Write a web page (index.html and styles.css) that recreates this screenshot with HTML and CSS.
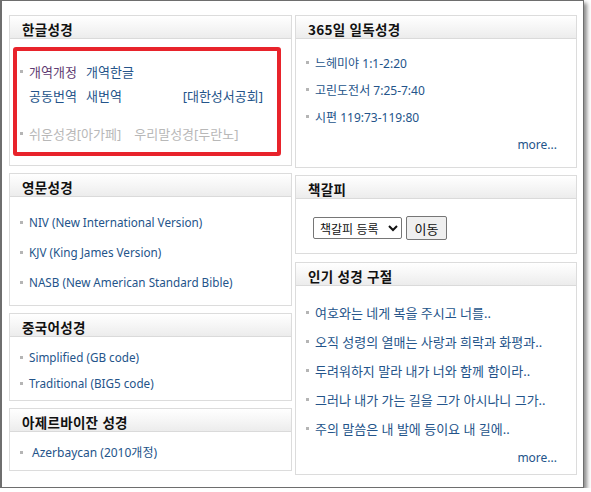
FILE: index.html
```html
<!DOCTYPE html>
<html lang="ko">
<head>
<meta charset="utf-8">
<title>성경</title>
<link rel="stylesheet" href="styles.css">
</head>
<body>
<div class="frame">
  <div class="cols">
    <div class="col">
      <section class="box b-kor">
        <h2 class="hd">한글성경</h2>
        <div class="bd kor">
          <div class="krow"><span class="dot"></span><a class="lnk visited w1">개역개정</a><a class="lnk">개역한글</a></div>
          <div class="krow"><span class="nodot"></span><a class="lnk w1">공동번역</a><a class="lnk">새번역</a><a class="lnk push">[대한성서공회]</a></div>
          <div class="krow r3"><span class="dot"></span><a class="lnk off">쉬운성경[아가페]</a><a class="lnk off g2">우리말성경[두란노]</a></div>
        </div>
        <div class="mark"></div>
      </section>
      <section class="box b-eng">
        <h2 class="hd">영문성경</h2>
        <ul class="bd list l30 en">
          <li><a class="lnk">NIV (New International Version)</a></li>
          <li><a class="lnk">KJV (King James Version)</a></li>
          <li><a class="lnk">NASB (New American Standard Bible)</a></li>
        </ul>
      </section>
      <section class="box b-chn">
        <h2 class="hd">중국어성경</h2>
        <ul class="bd list l26 en">
          <li><a class="lnk">Simplified (GB code)</a></li>
          <li><a class="lnk">Traditional (BIG5 code)</a></li>
        </ul>
      </section>
      <section class="box b-aze">
        <h2 class="hd">아제르바이잔 성경</h2>
        <ul class="bd list l26">
          <li><a class="lnk ind">Azerbaycan (2010개정)</a></li>
        </ul>
      </section>
    </div>
    <div class="col">
      <section class="box b-day">
        <h2 class="hd">365일 일독성경</h2>
        <ul class="bd list l27">
          <li><a class="lnk">느헤미야 1:1-2:20</a></li>
          <li><a class="lnk">고린도전서 7:25-7:40</a></li>
          <li><a class="lnk">시편 119:73-119:80</a></li>
        </ul>
        <div class="more m1"><a class="lnk">more...</a></div>
      </section>
      <section class="box b-mark">
        <h2 class="hd">책갈피</h2>
        <div class="bd bm">
          <select class="sel"><option>책갈피 등록</option></select>
          <button class="btn" type="button">이동</button>
        </div>
      </section>
      <section class="box b-pop">
        <h2 class="hd">인기 성경 구절</h2>
        <ul class="bd list l29 ko">
          <li><a class="lnk">여호와는 네게 복을 주시고 너를..</a></li>
          <li><a class="lnk">오직 성령의 열매는 사랑과 희락과 화평과..</a></li>
          <li><a class="lnk">두려워하지 말라 내가 너와 함께 함이라..</a></li>
          <li><a class="lnk">그러나 내가 가는 길을 그가 아시나니 그가..</a></li>
          <li><a class="lnk">주의 말씀은 내 발에 등이요 내 길에..</a></li>
        </ul>
        <div class="more m2"><a class="lnk">more...</a></div>
      </section>
    </div>
  </div>
</div>
</body>
</html>
```

FILE: styles.css
```css
* { box-sizing: border-box; }
html, body { margin: 0; padding: 0; background: #fff; }
body {
  font-family: "Noto Sans", "Noto Sans CJK KR", sans-serif;
  font-size: 12px;
  color: #333;
}
.frame {
  width: 584px;
  height: 488px;
  border: 1px solid #6e6e6e;
  border-left-width: 2px;
  box-shadow: 3px 3px 4px rgba(0,0,0,0.45);
  padding: 14px 0 0 7px;
  background: #fff;
}
.cols {
  display: grid;
  grid-template-columns: 283px 282px;
  column-gap: 3px;
  align-items: start;
}
.col { display: flex; flex-direction: column; gap: 7px; }
.box {
  position: relative;
  border: 1px solid #dcdcdc;
  background: #fff;
}
.b-kor { height: 151px; }
.b-eng { height: 133px; }
.b-chn { height: 88px; }
.b-aze { height: 63px; }
.b-day { height: 153px; }
.b-mark { height: 79px; margin-bottom: 1px; }
.b-pop { height: 213px; }
.hd {
  margin: 0;
  height: 23px;
  border-bottom: 1px solid #dadada;
  background: linear-gradient(#ffffff, #f6f6f6 50%, #ececec);
  font-family: "Noto Sans CJK KR", sans-serif;
  font-weight: 700;
  font-size: 13.5px;
  line-height: 26px;
  color: #111;
  padding-left: 12px;
  letter-spacing: 0.3px;
}
.bd { margin: 0; }
.lnk { color: #24548a; text-decoration: none; white-space: nowrap; }
.visited { color: #5e3a72; }
.off { color: #b8b8b8; }
.list { list-style: none; padding: 0 0 0 10px; }
.list li { display: flex; align-items: center; }
.list li::before, .dot {
  content: "";
  display: inline-block;
  width: 3px;
  height: 3px;
  background: #b5b5b5;
  margin-right: 6px;
  flex: none;
}
.en { font-size: 11.7px; }
.ko { font-size: 13px; }
.nodot { display: inline-block; width: 9px; flex: none; }
.l30 { padding-top: 10px; }
.l30 li { height: 30px; }
.l26 { padding-top: 7px; }
.l26 li { height: 26px; }
.l27 { padding-top: 10px; }
.l27 li { height: 27px; }
.l29 { padding-top: 12px; }
.l29 li { height: 29px; }
.ind { margin-left: 3px; }
.kor { padding: 20px 28px 0 10px; font-size: 13px; }
.krow { display: flex; align-items: center; height: 24px; }
.krow.r3 { margin-top: 14px; }
.w1 { width: 57px; flex: none; }
.g2 { margin-left: 13px; }
.push { margin-left: auto; }
.more { text-align: right; padding-right: 19px; line-height: 27px; }
.m1 { margin-top: 1px; }
.m2 { margin-top: 1px; }
.bm { padding: 17px 0 0 17px; display: flex; align-items: center; gap: 4px; }
.sel {
  font-family: "Noto Sans CJK KR", sans-serif;
  font-size: 12px;
  height: 22px;
  width: 89px;
  border: 1px solid #767676;
  border-radius: 2px;
  background: #fff;
  color: #111;
  padding: 0 0 0 2px;
}
.btn {
  font-family: "Noto Sans CJK KR", sans-serif;
  font-size: 13px;
  height: 24px;
  width: 41px;
  border: 1px solid #767676;
  border-radius: 2px;
  background: #efefef;
  color: #111;
  padding: 0;
}
.mark {
  position: absolute;
  left: 3px;
  top: 31px;
  width: 268px;
  height: 109px;
  border: 4px solid #e8232b;
  border-radius: 3px;
}
```
